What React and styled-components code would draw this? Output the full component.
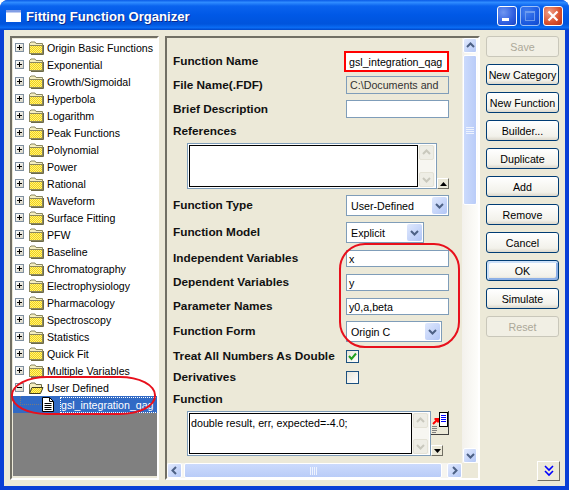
import React from 'react';
import styled, { createGlobalStyle } from 'styled-components';

const Global = createGlobalStyle`
  html, body { margin: 0; padding: 0; background: #fff; }
  * { box-sizing: border-box; }
`;

const uiFont = `"Liberation Sans", Arial, sans-serif`;

const Window = styled.div`
  width: 569px;
  height: 490px;
  display: flex;
  flex-direction: column;
  background: #0a3fd6;
  border-radius: 8px 8px 0 0;
  overflow: hidden;
  font-family: ${uiFont};
  font-size: 11px;
  color: #000;
`;

const TitleBar = styled.div`
  height: 30px;
  flex: none;
  display: flex;
  align-items: center;
  padding: 2px 6px 0 6px;
  background: linear-gradient(180deg, #0a5ae6 0%, #2f8cff 8%, #0a63ee 20%, #0058e6 50%, #0054dc 80%, #0a6cf4 92%, #0046c8 100%);
`;

const TitleText = styled.div`
  margin: 1px 0 0 5px;
  font-size: 13.1px;
  font-weight: 700;
  color: #fff;
  text-shadow: 1px 1px 0 #0a2a8c;
  flex: 1;
`;

const CtlButton = styled.div`
  width: 20px;
  height: 20px;
  margin-left: 3px;
  border: 1px solid #fff;
  border-radius: 3px;
  display: flex;
  align-items: center;
  justify-content: center;
  background: ${p => p.$close
    ? 'radial-gradient(circle at 30% 30%, #f0a088, #d9502c 60%, #b8321a)'
    : 'radial-gradient(circle at 30% 30%, #6f96f0, #2f5ee0 60%, #1c44c4)'};
  opacity: ${p => (p.$faded ? 0.6 : 1)};
`;

const Body = styled.div`
  flex: 1;
  display: flex;
  margin: 0 4px 4px 4px;
  padding: 6px 6px 5px 6px;
  background: #ece9d8;
`;

const Sunken = styled.div`
  border-top: 2px solid #716f64;
  border-left: 2px solid #716f64;
  border-right: 2px solid #fff;
  border-bottom: 2px solid #fff;
`;

const TreePanel = styled(Sunken)`
  position: relative;
  width: 149px;
  height: 444px;
  padding: 1px 0 2px 1px;
  flex: none;
`;

const TreeList = styled.div`
  height: 100%;
  background: #808080;
  display: flex;
  flex-direction: column;
`;

const TreeRow = styled.div`
  height: 17px;
  flex: none;
  display: flex;
  align-items: center;
  padding-left: 2px;
  background: ${p => (p.$selected ? '#316ac5' : '#fff')};
  white-space: nowrap;
  overflow: hidden;
`;

const Expander = styled.div`
  width: 9px;
  height: 9px;
  flex: none;
  position: relative;
  border: 1px solid #7f8f9f;
  background: linear-gradient(135deg, #fff, #d8d4c4);
  &::before {
    content: '';
    position: absolute;
    left: 1px;
    top: 3px;
    width: 5px;
    height: 1px;
    background: #000;
  }
  &::after {
    content: '';
    display: ${p => (p.$open ? 'none' : 'block')};
    position: absolute;
    left: 3px;
    top: 1px;
    width: 1px;
    height: 5px;
    background: #000;
  }
`;

const FolderSlot = styled.div`
  margin-left: 4px;
  width: 17px;
  height: 15px;
  flex: none;
  display: flex;
  align-items: center;
`;

const TreeLabel = styled.span`
  margin-left: 2px;
  font-size: 10.6px;
`;

const ChildLead = styled.div`
  width: 23px;
  height: 9px;
  margin-left: 5px;
  flex: none;
  border-left: 1px dotted #7a7a7a;
  border-bottom: 1px dotted #7a7a7a;
  margin-top: -9px;
`;

const DocSlot = styled.div`
  width: 14px;
  height: 16px;
  flex: none;
  margin-left: -1px;
  display: flex;
  align-items: center;
`;

const SelectedLabel = styled.span`
  margin-left: 5px;
  color: #fff;
  outline: 1px dotted #fff;
  outline-offset: 0;
  padding: 1px 12px 1px 0;
  font-size: 10.6px;
`;

const TreeCircle = styled.div`
  position: absolute;
  left: -1px;
  top: 338px;
  width: 145px;
  height: 39px;
  border: 2px solid #e8101c;
  border-radius: 36px / 19px;
  pointer-events: none;
`;

const FormPanel = styled(Sunken)`
  margin-left: 6px;
  width: 315px;
  height: 444px;
  flex: none;
  display: grid;
  grid-template-columns: 295px 16px;
  grid-template-rows: 425px 15px;
  position: relative;
`;

const FormArea = styled.div`
  padding: 13px 0 0 6px;
  overflow: hidden;
`;

const Row = styled.div`
  display: flex;
  align-items: center;
  margin-top: ${p => p.$gap || 0}px;
  height: ${p => p.$h}px;
`;

const Label = styled.div`
  width: 173px;
  flex: none;
  padding-bottom: 1px;
  font-size: 11.8px;
  font-weight: 700;
  color: #111;
  white-space: nowrap;
`;

const Field = styled.div`
  width: ${p => p.$w || 103}px;
  height: ${p => p.$h || 18}px;
  border: 1px solid #7f9db9;
  background: ${p => (p.$ro ? '#ece9d8' : '#fff')};
  font-size: 10.7px;
  display: flex;
  align-items: center;
  padding-left: ${p => p.$pad || 2}px;
  white-space: nowrap;
  overflow: hidden;
  color: ${p => (p.$ro ? '#333' : '#000')};
`;

const RedField = styled(Field)`
  width: 105px;
  height: 21px;
  margin-left: -2px;
  border: 2px solid #f00;
  padding-left: 3px;
`;

const Select = styled.div`
  width: ${p => p.$w}px;
  height: 21px;
  border: 1px solid #7f9db9;
  background: #fff;
  display: flex;
  align-items: center;
  justify-content: space-between;
  padding: 0 1px 0 4px;
  font-size: 10.7px;
`;

const SelectArrow = styled.div`
  width: 15px;
  height: 17px;
  border-radius: 2px;
  background: linear-gradient(135deg, #dfe8fd, #b2c6f6);
  display: flex;
  align-items: center;
  justify-content: center;
`;

const Checkbox = styled.div`
  width: 13px;
  height: 13px;
  border: 1px solid #1c5180;
  background: linear-gradient(135deg, #e8e6da, #fff);
  display: flex;
  align-items: center;
  justify-content: center;
`;

const Memo = styled.div`
  display: flex;
  align-items: flex-end;
  margin-left: 14px;
  margin-top: ${p => p.$gap}px;
`;

const MemoFrame = styled.div`
  width: ${p => p.$w}px;
  height: ${p => p.$h}px;
  border: 1px solid #7f9db9;
  padding: 1px;
  display: flex;
  background: #fff;
`;

const MemoText = styled.div`
  flex: 1;
  border: 1px solid #000;
  background: #fff;
  padding: 3px 1px;
  font-size: 10.7px;
  white-space: nowrap;
`;

const MemoScroll = styled.div`
  width: 17px;
  flex: none;
  display: flex;
  flex-direction: column;
  justify-content: space-between;
  background: #f7f6f1;
`;

const GreyBtn = styled.div`
  width: 15px;
  height: 15px;
  margin: 0 1px;
  border: 1px solid #e4e2d6;
  border-radius: 2px;
  background: #eeede5;
  display: flex;
  align-items: center;
  justify-content: center;
`;

const TinyBtn = styled.div`
  width: 12px;
  height: 11px;
  flex: none;
  background: #ece9d8;
  border-top: 1px solid #fff;
  border-left: 1px solid #fff;
  border-right: 1px solid #716f64;
  border-bottom: 1px solid #716f64;
  display: flex;
  align-items: center;
  justify-content: center;
`;

const EditorSide = styled.div`
  display: flex;
  flex-direction: column;
  justify-content: space-between;
  height: 45px;
`;

const IconBtn = styled.div`
  width: 18px;
  height: 24px;
  background: #ece9d8;
  border-right: 1px solid #404040;
  border-bottom: 1px solid #404040;
`;

const ScrollCorner = styled.div`
  background: #ece9d8;
`;

const VBar = styled.div`
  grid-column: 2;
  grid-row: 1;
  display: flex;
  flex-direction: column;
  background: linear-gradient(90deg, #f3f1ec, #fdfdfa);
  padding: 0 1px;
`;

const HBar = styled.div`
  grid-column: 1;
  grid-row: 2;
  display: flex;
  align-items: stretch;
  background: #f6f5f0;
`;

const ScrollBtn = styled.div`
  width: ${p => p.$w || 15}px;
  height: ${p => p.$h || 15}px;
  flex: none;
  border: 1px solid #fff;
  border-radius: 2px;
  background: linear-gradient(135deg, #e2eafe, #b4c8f6);
  display: flex;
  align-items: center;
  justify-content: center;
`;

const VThumb = styled.div`
  height: 150px;
  margin-top: 2px;
  border: 1px solid #fff;
  border-radius: 2px;
  background: linear-gradient(90deg, #cbdafc, #b9ccf8);
  display: flex;
  align-items: center;
  justify-content: center;
`;

const HThumb = styled.div`
  width: 258px;
  margin-left: 2px;
  border: 1px solid #fff;
  border-radius: 2px;
  background: linear-gradient(180deg, #cbdafc, #b9ccf8);
  display: flex;
  align-items: center;
  justify-content: center;
`;

const Spacer = styled.div`
  flex: 1;
`;

const Annotation = styled.div`
  position: absolute;
  left: 172px;
  top: 205px;
  width: 121px;
  height: 105px;
  border: 2px solid #e8101c;
  border-radius: 26px;
  pointer-events: none;
`;

const ButtonColumn = styled.div`
  margin-left: 6px;
  flex: 1;
  display: flex;
  flex-direction: column;
  gap: 7px;
`;

const Btn = styled.div`
  width: 73px;
  height: 21px;
  flex: none;
  border: 1px solid ${p => (p.$off ? '#c9c7ba' : '#003c74')};
  border-radius: 3px;
  background: ${p => (p.$off ? '#f1efe4' : 'linear-gradient(180deg, #fff, #f2f1ea 80%, #dcd8cc)')};
  color: ${p => (p.$off ? '#aca899' : '#000')};
  box-shadow: ${p => (p.$default ? 'inset 2px 2px 0 #cde0f8, inset -2px -2px 0 #8db0e6' : 'none')};
  font-size: 10.7px;
  display: flex;
  align-items: center;
  justify-content: center;
  white-space: nowrap;
`;

const MoreBtn = styled.div`
  align-self: flex-end;
  margin-top: auto;
  margin-right: -1px;
  width: 23px;
  height: 20px;
  background: #ece9d8;
  border-top: 1px solid #fff;
  border-left: 1px solid #fff;
  border-right: 1px solid #716f64;
  border-bottom: 1px solid #716f64;
  display: flex;
  align-items: center;
  justify-content: center;
`;

const TREE = [
  'Origin Basic Functions', 'Exponential', 'Growth/Sigmoidal', 'Hyperbola', 'Logarithm',
  'Peak Functions', 'Polynomial', 'Power', 'Rational', 'Waveform', 'Surface Fitting', 'PFW',
  'Baseline', 'Chromatography', 'Electrophysiology', 'Pharmacology', 'Spectroscopy',
  'Statistics', 'Quick Fit', 'Multiple Variables',
];

const BUTTONS = [
  ['Save', { $off: true }], ['New Category'], ['New Function'], ['Builder...'], ['Duplicate'],
  ['Add'], ['Remove'], ['Cancel'], ['OK', { $default: true }], ['Simulate'], ['Reset', { $off: true }],
];

function FolderIcon({ open }) {
  return (
    <svg width="16" height="14" viewBox="0 0 16 14">
      <defs>
        <pattern id="dither" width="2" height="2" patternUnits="userSpaceOnUse">
          <rect width="2" height="2" fill="#fff27a" />
          <rect width="1" height="1" fill="#f2d21a" />
          <rect x="1" y="1" width="1" height="1" fill="#f2d21a" />
        </pattern>
      </defs>
      {open ? (
        <>
          <path d="M1.5 12.5V3.5L3 2h4l1 1.5h5.5v3" fill="#f5eec0" stroke="#6d6a48" />
          <path d="M1.5 12.5L4 6.5h11l-2.5 6z" fill="url(#dither)" stroke="#403e20" />
        </>
      ) : (
        <>
          <path d="M1.5 12.5V2.5L3 1h4l1 1.5h6.5v10z" fill="#f5eec0" stroke="#8a8760" />
          <rect x="1.5" y="4.5" width="13" height="8" fill="url(#dither)" stroke="#8a8760" />
          <path d="M15.5 4v9.5H3" fill="none" stroke="#6d6a48" />
        </>
      )}
    </svg>
  );
}

function DocIcon() {
  return (
    <svg width="12" height="15" viewBox="0 0 12 15">
      <path d="M.5.5h7l4 4v10H.5z" fill="#fff" stroke="#000" />
      <path d="M7.5.5v4h4M2.5 6.5h7M2.5 8.5h7M2.5 10.5h7M2.5 12.5h7" fill="none" stroke="#000" />
    </svg>
  );
}

function Chevron({ dir = 'down', color = '#4d6185', size = 9 }) {
  const d = {
    down: 'M1 3l3.5 3.5L8 3',
    up: 'M1 6l3.5-3.5L8 6',
    left: 'M6 1L2.5 4.5 6 8',
    right: 'M3 1l3.5 3.5L3 8',
  }[dir];
  return (
    <svg width={size} height={size} viewBox="0 0 9 9">
      <path d={d} fill="none" stroke={color} strokeWidth="2" />
    </svg>
  );
}

function Grip({ vertical }) {
  return (
    <svg width="8" height="8" viewBox="0 0 8 8">
      {vertical
        ? <path d="M0 1.5h8M0 3.5h8M0 5.5h8M0 7.5h8" stroke="#eef3fe" />
        : <path d="M1.5 0v8M3.5 0v8M5.5 0v8M7.5 0v8" stroke="#eef3fe" />}
    </svg>
  );
}

function TinyArrow({ up }) {
  return (
    <svg width="7" height="4" viewBox="0 0 7 4">
      <path d={up ? 'M3.5 0L7 4H0z' : 'M0 0h7L3.5 4z'} fill="#000" />
    </svg>
  );
}

function EditorIcon() {
  return (
    <svg width="18" height="24" viewBox="0 0 18 24">
      <rect x="8.5" y="1.5" width="8" height="14" fill="#fff" stroke="#000" />
      <path d="M10 4.5h5M10 6.5h5M10 8.5h5M10 10.5h5" stroke="#00f" />
      <path d="M2 13l5-5M3.5 8H7v3.5" fill="none" stroke="#f00" strokeWidth="2" />
      <path d="M1 15.5h5M1 17.5h5M1 19.5h5M1 21.5h4" stroke="#808080" />
    </svg>
  );
}

function CheckMark() {
  return (
    <svg width="11" height="11" viewBox="0 0 11 11">
      <path d="M2 5l2.5 3L9 2.5" fill="none" stroke="#21a121" strokeWidth="2" />
    </svg>
  );
}

function FieldRow({ label, children, gap, h }) {
  return (
    <Row $gap={gap} $h={h}>
      <Label>{label}</Label>
      {children}
    </Row>
  );
}

function DropDown({ w, value }) {
  return (
    <Select $w={w}>
      {value}
      <SelectArrow><Chevron /></SelectArrow>
    </Select>
  );
}

function MemoScrollbar() {
  return (
    <MemoScroll>
      <GreyBtn><Chevron dir="up" color="#c9c8bd" /></GreyBtn>
      <GreyBtn><Chevron color="#c9c8bd" /></GreyBtn>
    </MemoScroll>
  );
}

export default function App() {
  return (
    <>
      <Global />
      <Window>
        <TitleBar>
          <svg width="15" height="12" viewBox="0 0 15 12">
            <rect width="15" height="12" fill="#fff" />
            <rect y="0" width="15" height="2.5" fill="#1c4fd0" opacity="0.55" />
          </svg>
          <TitleText>Fitting Function Organizer</TitleText>
          <CtlButton>
            <svg width="14" height="14" viewBox="0 0 14 14"><rect x="2" y="9" width="7" height="3" fill="#fff" /></svg>
          </CtlButton>
          <CtlButton $faded>
            <svg width="14" height="14" viewBox="0 0 14 14"><rect x="2.5" y="2.5" width="9" height="9" fill="none" stroke="#b4c6f4" /><rect x="2" y="2" width="10" height="2" fill="#b4c6f4" /></svg>
          </CtlButton>
          <CtlButton $close>
            <svg width="14" height="14" viewBox="0 0 14 14"><path d="M2.5 2.5l9 9M11.5 2.5l-9 9" stroke="#fff" strokeWidth="2.2" /></svg>
          </CtlButton>
        </TitleBar>
        <Body>
          <TreePanel>
            <TreeList>
              {TREE.map(name => (
                <TreeRow key={name}>
                  <Expander />
                  <FolderSlot><FolderIcon /></FolderSlot>
                  <TreeLabel>{name}</TreeLabel>
                </TreeRow>
              ))}
              <TreeRow>
                <Expander $open />
                <FolderSlot><FolderIcon open /></FolderSlot>
                <TreeLabel>User Defined</TreeLabel>
              </TreeRow>
              <TreeRow $selected>
                <ChildLead />
                <DocSlot><DocIcon /></DocSlot>
                <SelectedLabel>gsl_integration_qag</SelectedLabel>
              </TreeRow>
            </TreeList>
            <TreeCircle />
          </TreePanel>
          <FormPanel>
            <FormArea>
              <FieldRow label="Function Name" h={21}>
                <RedField>gsl_integration_qag</RedField>
              </FieldRow>
              <FieldRow label="File Name(.FDF)" gap={4} h={18}>
                <Field $ro $pad={3}>C:\Documents and</Field>
              </FieldRow>
              <FieldRow label="Brief Description" gap={6} h={18}>
                <Field />
              </FieldRow>
              <FieldRow label="References" gap={4} h={18} />
              <Memo $gap={3}>
                <MemoFrame $w={250} $h={46}>
                  <MemoText />
                  <MemoScrollbar />
                </MemoFrame>
                <TinyBtn><TinyArrow up /></TinyBtn>
              </Memo>
              <FieldRow label="Function Type" gap={6} h={21}>
                <DropDown w={103} value="User-Defined" />
              </FieldRow>
              <FieldRow label="Function Model" gap={6} h={21}>
                <DropDown w={78} value="Explicit" />
              </FieldRow>
              <FieldRow label="Independent Variables" gap={7} h={17}>
                <Field $h={17}>x</Field>
              </FieldRow>
              <FieldRow label="Dependent Variables" gap={7} h={17}>
                <Field $h={17}>y</Field>
              </FieldRow>
              <FieldRow label="Parameter Names" gap={7} h={17}>
                <Field $h={17}>y0,a,beta</Field>
              </FieldRow>
              <FieldRow label="Function Form" gap={6} h={21}>
                <DropDown w={96} value="Origin C" />
              </FieldRow>
              <FieldRow label="Treat All Numbers As Double" gap={8} h={13}>
                <Checkbox><CheckMark /></Checkbox>
              </FieldRow>
              <FieldRow label="Derivatives" gap={8} h={13}>
                <Checkbox />
              </FieldRow>
              <FieldRow label="Function" gap={6} h={18} />
              <Memo $gap={3}>
                <MemoFrame $w={244} $h={45}>
                  <MemoText>double result, err, expected=-4.0;</MemoText>
                  <MemoScrollbar />
                </MemoFrame>
                <EditorSide>
                  <IconBtn><EditorIcon /></IconBtn>
                  <TinyBtn><TinyArrow /></TinyBtn>
                </EditorSide>
              </Memo>
            </FormArea>
            <VBar>
              <ScrollBtn $w={14}><Chevron dir="up" /></ScrollBtn>
              <VThumb><Grip vertical /></VThumb>
              <Spacer />
              <ScrollBtn $w={14}><Chevron /></ScrollBtn>
            </VBar>
            <HBar>
              <ScrollBtn><Chevron dir="left" /></ScrollBtn>
              <HThumb><Grip /></HThumb>
              <Spacer />
              <ScrollBtn><Chevron dir="right" /></ScrollBtn>
            </HBar>
            <ScrollCorner />
            <Annotation />
          </FormPanel>
          <ButtonColumn>
            {BUTTONS.map(([text, flags]) => (
              <Btn key={text} {...flags}>{text}</Btn>
            ))}
            <MoreBtn>
              <svg width="10" height="12" viewBox="0 0 10 12">
                <path d="M1 1l4 4 4-4M1 6l4 4 4-4" fill="none" stroke="#00f" strokeWidth="1.6" />
              </svg>
            </MoreBtn>
          </ButtonColumn>
        </Body>
      </Window>
    </>
  );
}
